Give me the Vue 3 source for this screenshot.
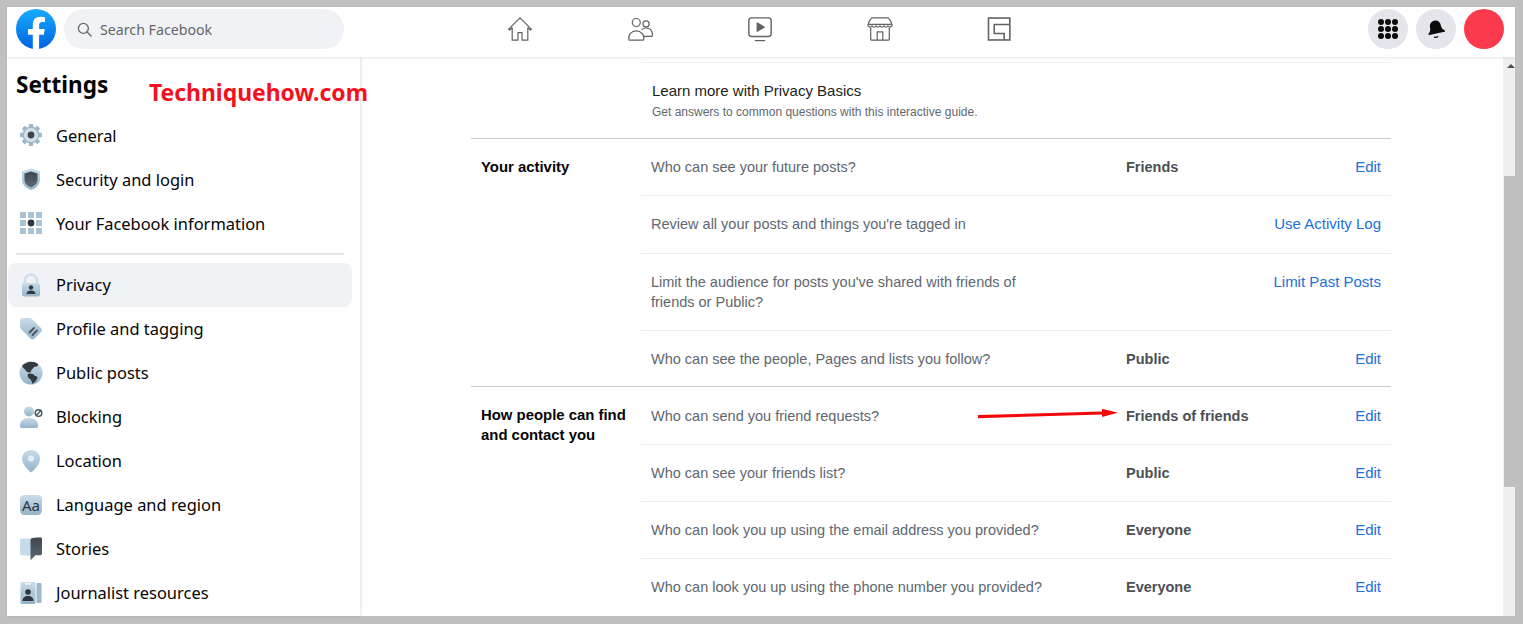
<script setup>
const navIcons = ['home', 'friends', 'watch', 'market', 'groups']
const menuTop = [
  { icon: 'i-gear', label: 'General' },
  { icon: 'i-shield', label: 'Security and login' },
  { icon: 'i-grid', label: 'Your Facebook information' }
]
const menuBottom = [
  { icon: 'i-lock', label: 'Privacy', active: true },
  { icon: 'i-tag', label: 'Profile and tagging' },
  { icon: 'i-globe', label: 'Public posts' },
  { icon: 'i-block', label: 'Blocking' },
  { icon: 'i-pin', label: 'Location' },
  { icon: 'i-lang', label: 'Language and region' },
  { icon: 'i-book', label: 'Stories' },
  { icon: 'i-badge', label: 'Journalist resources' }
]
const sections = [
  {
    title: 'Your activity',
    rows: [
      { q: 'Who can see your future posts?', v: 'Friends', a: 'Edit', h: 56 },
      { q: "Review all your posts and things you're tagged in", v: '', a: 'Use Activity Log', h: 58, nudge: true },
      { q: "Limit the audience for posts you've shared with friends of friends or Public?", v: '', a: 'Limit Past Posts', h: 77, top: true },
      { q: 'Who can see the people, Pages and lists you follow?', v: 'Public', a: 'Edit', h: 56 }
    ]
  },
  {
    title: 'How people can find and contact you',
    rows: [
      { q: 'Who can send you friend requests?', v: 'Friends of friends', a: 'Edit', h: 57 },
      { q: 'Who can see your friends list?', v: 'Public', a: 'Edit', h: 57 },
      { q: 'Who can look you up using the email address you provided?', v: 'Everyone', a: 'Edit', h: 57 },
      { q: 'Who can look you up using the phone number you provided?', v: 'Everyone', a: 'Edit', h: 57 }
    ]
  }
]
</script>

<template>
  <div class="frame">
    <svg class="defs" aria-hidden="true">
      <defs>
        <linearGradient id="fb" x1="0" y1="0" x2="0" y2="1"><stop offset="0" stop-color="#18acfe" /><stop offset="1" stop-color="#0163e0" /></linearGradient>
        <linearGradient id="pale" x1="0" y1="0" x2="0" y2="1"><stop offset="0" stop-color="#c9dcea" /><stop offset="1" stop-color="#94b4c9" /></linearGradient>
        <linearGradient id="dark" x1="0" y1="0" x2="0" y2="1"><stop offset="0" stop-color="#3f4650" /><stop offset="1" stop-color="#5f6873" /></linearGradient>
        <symbol id="i-gear" viewBox="0 0 24 24">
          <g fill="#9db8ca"><circle cx="12" cy="12" r="8.5" />
            <rect x="9.8" y="1" width="4.4" height="5" rx="1" /><rect x="9.8" y="18" width="4.4" height="5" rx="1" />
            <rect x="1" y="9.8" width="5" height="4.4" rx="1" /><rect x="18" y="9.8" width="5" height="4.4" rx="1" />
            <rect x="9.8" y="1" width="4.4" height="5" rx="1" transform="rotate(45 12 12)" /><rect x="9.8" y="18" width="4.4" height="5" rx="1" transform="rotate(45 12 12)" />
            <rect x="1" y="9.8" width="5" height="4.4" rx="1" transform="rotate(45 12 12)" /><rect x="18" y="9.8" width="5" height="4.4" rx="1" transform="rotate(45 12 12)" /></g>
          <circle cx="12" cy="12" r="7" fill="#d3e0ea" /><circle cx="12" cy="12" r="3.4" fill="#3f4650" />
        </symbol>
        <symbol id="i-shield" viewBox="0 0 24 24">
          <path d="M12 1.5 21 4.5v8c0 5.5-4.5 9-9 10.500-4.500-1.500-9-5-9-10.500v-8z" fill="url(#pale)" />
          <path d="M12 4.500 18.500 6.500v6c0 4-3.200 6.500-6.500 7.800-3.300-1.300-6.500-3.800-6.500-7.800v-6z" fill="url(#dark)" />
        </symbol>
        <symbol id="i-grid" viewBox="0 0 24 24">
          <g fill="#a9c3d4"><rect x="1" y="1" width="6" height="6" /><rect x="9" y="1" width="6" height="6" /><rect x="17" y="1" width="6" height="6" />
            <rect x="1" y="9" width="6" height="6" /><rect x="17" y="9" width="6" height="6" />
            <rect x="1" y="17" width="6" height="6" /><rect x="9" y="17" width="6" height="6" /><rect x="17" y="17" width="6" height="6" /></g>
          <circle cx="12" cy="12" r="3.400" fill="#2f353d" />
        </symbol>
        <symbol id="i-lock" viewBox="0 0 24 24">
          <path d="M6 11V7.500a6 6 0 0 1 12 0V11" fill="none" stroke="#d2dfe9" stroke-width="2.600" />
          <rect x="3" y="10" width="18" height="13.500" rx="2.500" fill="url(#pale)" />
          <circle cx="12" cy="14.500" r="2.200" fill="#343a42" /><path d="M7.500 21c0-2.500 2-3.500 4.500-3.500s4.500 1 4.500 3.500z" fill="#343a42" />
        </symbol>
        <symbol id="i-tag" viewBox="0 0 24 24">
          <path d="M1 3.500C1 2 2 1 3.500 1h7c1 0 1.800.4 2.500 1l9 9c1.200 1.200 1.200 2.800 0 4l-6.500 6.500c-1.200 1.200-2.800 1.200-4 0L2 12c-.7-.7-1-1.500-1-2.500z" fill="url(#pale)" />
          <path d="M10.500 15.500 15 11M13.500 18 18 13.500" stroke="#4a525c" stroke-width="1.800" stroke-linecap="round" />
        </symbol>
        <symbol id="i-globe" viewBox="0 0 24 24">
          <circle cx="12" cy="12" r="11.500" fill="url(#pale)" />
          <path d="M3 5C6 1 14-1 19 3c1 2-2 3-4 3-1 2-3 2-3 5-2 1-5 0-5.500-2C5.500 8 4 7 3 5zM9 13c3-1 6 0 7 2 2 0 3 1 2 3-1 2-3 4-5 5 0-3-1-4-2-5-2-1-3-3-2-5z" fill="#343a42" />
        </symbol>
        <symbol id="i-block" viewBox="0 0 24 24">
          <circle cx="10" cy="6.500" r="5" fill="url(#pale)" /><path d="M1 21c0-5 3-8 9-8s9 3 9 8c0 1.500-1 2-2 2H3c-1 0-2-.5-2-2z" fill="url(#pale)" />
          <circle cx="19.500" cy="8" r="3.300" fill="none" stroke="#4a525c" stroke-width="1.400" /><path d="M17.300 10.300 21.700 5.700" stroke="#4a525c" stroke-width="1.400" />
        </symbol>
        <symbol id="i-pin" viewBox="0 0 24 24">
          <path d="M12 1c5 0 9 3.800 9 8.800 0 5-5 10.500-9 13.700-4-3.200-9-8.700-9-13.700C3 4.800 7 1 12 1z" fill="url(#pale)" /><circle cx="12" cy="9.500" r="3" fill="#e4eef5" />
        </symbol>
        <symbol id="i-lang" viewBox="0 0 24 24">
          <rect x="1" y="2" width="22" height="20" rx="4.500" fill="url(#pale)" />
        </symbol>
        <symbol id="i-book" viewBox="0 0 24 24">
          <path d="M1 3.500C1 2.300 2 1.500 3 1.500h9v17H3c-1 0-2-.8-2-2z" fill="#c6dbe9" />
          <path d="M11.500 3c0-1 .8-1.800 2-2 2.500-.4 6-.5 8-.5 1 0 1.500.7 1.500 1.700v14.300c0 1-.7 1.700-1.500 1.700h-5l-5 5z" fill="url(#dark)" />
        </symbol>
        <symbol id="i-badge" viewBox="0 0 24 24">
          <rect x="1.500" y="1" width="15" height="22" rx="1.500" fill="url(#pale)" /><rect x="17.500" y="2" width="5" height="20" rx="1" fill="#9db8ca" />
          <rect x="6" y="2" width="6" height="1.600" fill="#eef4f8" />
          <circle cx="9" cy="11" r="2.800" fill="#2f353d" /><path d="M3.500 20c0-3.500 2.500-5 5.500-5s5.500 1.500 5.500 5z" fill="#2f353d" />
        </symbol>
      </defs>
    </svg>

    <header class="topbar">
      <div class="top-left">
        <svg class="logo" viewBox="0 0 40 40">
          <circle cx="20" cy="20" r="20" fill="url(#fb)" />
          <path d="M27.800 25.800l.9-5.800h-5.600v-3.800c0-1.600.8-3.100 3.300-3.100h2.500V8.200s-2.300-.4-4.500-.4c-4.600 0-7.600 2.800-7.600 7.800V20H12v5.800h4.800V40h6.300V25.800z" fill="#fff" />
        </svg>
        <div class="search">
          <svg class="search-icon" viewBox="0 0 16 16" fill="none" stroke="#65676b" stroke-width="1.400">
            <circle cx="6.800" cy="6.800" r="5.300" /><path d="M10.700 10.700 15 15" stroke-linecap="round" />
          </svg>
          <span>Search Facebook</span>
        </div>
      </div>
      <nav class="nav">
        <div v-for="n in navIcons" :key="n" class="nav-item">
          <svg viewBox="0 0 28 28" class="nav-icon" fill="none" stroke="#606266" stroke-width="1.300" stroke-linejoin="round" stroke-linecap="round">
            <template v-if="n === 'home'">
              <path d="M14 2 1.800 14.200l.9 1 2.900-2.500V26h6.200v-8h4.400v8h6.200V12.700l2.900 2.500.9-1z" />
            </template>
            <template v-else-if="n === 'friends'">
              <circle cx="10" cy="7" r="4.300" /><circle cx="20.500" cy="8.500" r="3.300" />
              <path d="M2 25c-1-5 3-9 8-9s9 4 8 9c0 .5-.5 1-1 1H3c-.5 0-1-.5-1-1z" />
              <path d="M16 14.500c1.300-1 3-1.600 4.500-1.600 4.500 0 7.500 3.600 6.800 8 0 .6-.5 1.100-1 1.100H18.500" />
            </template>
            <template v-else-if="n === 'watch'">
              <rect x="2" y="2" width="24" height="20" rx="3" stroke-width="1.500" />
              <path d="M11 7.500v9l7.500-4.500z" fill="#606266" /><path d="M9 26.500h10" stroke-width="1.500" />
            </template>
            <template v-else-if="n === 'market'">
              <path d="M5 2h18c2 2 3.500 5 4 8-1 2.500-3.400 2.500-4.400.6-1 2-3.600 2-4.400 0-1 2-3.400 2-4.200 0-1 2-3.400 2-4.200 0-1 2-3.600 2-4.400 0-1 1.900-3.400 1.900-4.400-.6.500-3 2-6 4-8z" />
              <path d="M1.500 9h25" /><path d="M4 13v12c0 .6.400 1 1 1h18c.6 0 1-.4 1-1V13" />
              <path d="M11 26V17h6v9" />
            </template>
            <template v-else>
              <rect x="1.600" y="2.200" width="23" height="23.600" stroke-width="1.700" stroke-linejoin="miter" />
              <path d="M24.600 9.200H7.800V18.800H18.500V25.800" stroke-width="1.700" stroke-linejoin="miter" stroke-linecap="butt" />
            </template>
          </svg>
        </div>
      </nav>
      <div class="top-right">
        <div class="round">
          <svg class="apps" viewBox="0 0 20 20" fill="#0b0b0b">
            <circle v-for="p in 9" :key="p" :cx="3 + ((p - 1) % 3) * 7" :cy="3 + Math.floor((p - 1) / 3) * 7" r="3" />
          </svg>
        </div>
        <div class="round">
          <svg class="bell" viewBox="0 0 20 20" fill="#0b0b0b">
            <path d="M10 1.500c3.500 0 5.500 2.500 5.500 6 0 2.500 1 4.200 2.800 5.700.5.500.2 1.300-.5 1.300H2.200c-.7 0-1-.8-.5-1.300C3.500 11.700 4.500 10 4.500 7.500c0-3.500 2-6 5.500-6z" transform="rotate(-12 10 10)" />
            <path d="M8 17.600c1.400.4 2.900.2 4-.6l.6.800c-1.400 1.200-3.200 1.500-4.700.9z" />
          </svg>
        </div>
        <div class="avatar"></div>
      </div>
    </header>

    <div class="content">
      <aside class="sidebar">
        <h1 class="side-title">Settings</h1>
        <span class="watermark">Techniquehow.com</span>
        <div v-for="m in menuTop" :key="m.label" class="menu-item">
          <svg class="menu-icon"><use :href="'#' + m.icon" /></svg>
          <span>{{ m.label }}</span>
        </div>
        <div class="side-divider"></div>
        <div v-for="m in menuBottom" :key="m.label" class="menu-item" :class="{ active: m.active }">
          <svg class="menu-icon"><use :href="'#' + m.icon" /></svg>
          <span v-if="m.icon === 'i-lang'" class="aa">Aa</span>
          <span>{{ m.label }}</span>
        </div>
      </aside>

      <main class="main">
        <div class="table">
          <div class="intro">
            <div class="intro-title">Learn more with Privacy Basics</div>
            <div class="intro-sub">Get answers to common questions with this interactive guide.</div>
          </div>
          <section v-for="s in sections" :key="s.title" class="section">
            <h2 class="sec-title">{{ s.title }}</h2>
            <div class="rows">
              <div v-for="r in s.rows" :key="r.q" class="row" :class="{ 'row-top': r.top, 'row-nudge': r.nudge }" :style="{ height: r.h + 'px' }">
                <div class="q">{{ r.q }}</div>
                <div class="v">{{ r.v }}</div>
                <a class="a">{{ r.a }}</a>
              </div>
            </div>
          </section>
          <svg class="arrow" viewBox="0 0 142 13">
            <path d="M1 9 125 5.600V2.700L141 6.700 125 11V8.600L1 12.200z" fill="#f20a0a" />
          </svg>
        </div>
      </main>

      <div class="scrollbar">
        <div class="up"></div>
        <div class="thumb"></div>
      </div>
    </div>
  </div>
</template>

<style>
html, body { margin: 0; background: #c0c0c0; }
</style>

<style scoped>
.frame {
  box-sizing: border-box;
  width: 1523px;
  height: 624px;
  padding: 7px 8px 8px 7px;
  background: #c0c0c0;
  overflow: hidden;
  display: flex;
  flex-direction: column;
  font-family: "Liberation Sans", Arial, sans-serif;
}
.defs { width: 0; height: 0; display: block; }
.topbar {
  height: 50px;
  flex: none;
  box-sizing: border-box;
  padding-top: 2px;
  background: #fff;
  display: grid;
  grid-template-columns: 1fr auto 1fr;
  align-items: start;
  position: relative;
  z-index: 2;
  box-shadow: 0 1px 3px rgba(0, 0, 0, .1);
}
.top-left { display: flex; align-items: center; gap: 8px; padding-left: 9px; }
.logo { width: 40px; height: 40px; display: block; }
.search {
  width: 280px;
  height: 40px;
  border-radius: 20px;
  background: #f0f2f5;
  display: flex;
  align-items: center;
  gap: 8px;
  padding-left: 13px;
  box-sizing: border-box;
  font: 14.200px "Noto Sans", sans-serif;
  color: #65676b;
}
.search-icon { width: 15px; height: 15px; }
.nav { display: flex; margin-left: -2px; padding-top: 7px; }
.nav-item { width: 120px; display: flex; justify-content: center; }
.nav-icon { width: 26px; height: 26px; display: block; }
.top-right { display: flex; justify-content: flex-end; gap: 8px; padding-right: 11px; }
.round {
  width: 40px;
  height: 40px;
  border-radius: 50%;
  background: #e4e6eb;
  display: flex;
  align-items: center;
  justify-content: center;
}
.apps { width: 20px; height: 20px; }
.bell { width: 20px; height: 20px; }
.avatar { width: 40px; height: 40px; border-radius: 50%; background: #fb3a4e; }
.content { flex: 1; min-height: 0; display: flex; background: #fff; }
.sidebar {
  width: 353px;
  flex: none;
  position: relative;
  background: #fff;
  box-shadow: 1px 0 3px rgba(0, 0, 0, .12);
  font: 16.450px "Noto Sans", sans-serif;
  color: #050505;
  z-index: 1;
}
.side-title { margin: 8px 0 8px 9px; height: 40px; font: 700 22.500px/40px "Noto Sans", sans-serif; color: #050505; }
.watermark {
  position: absolute;
  left: 142px;
  top: 18px;
  font: 700 22.900px/36px "Noto Sans", sans-serif;
  color: #f5101e;
  white-space: nowrap;
}
.menu-item {
  position: relative;
  height: 44px;
  width: 344px;
  margin-left: 1px;
  padding-left: 11px;
  box-sizing: border-box;
  display: flex;
  align-items: center;
  gap: 13px;
  border-radius: 8px;
}
.menu-item.active { background: #f0f2f5; }
.menu-icon { width: 24px; height: 24px; flex: none; }
.aa {
  position: absolute;
  left: 12px;
  width: 22px;
  text-align: center;
  font: 15px "Noto Sans", sans-serif;
  color: #2f353d;
}
.side-divider { height: 1.500px; margin: 8px 9px 8px 9px; background: #e4e6eb; width: 328px; }
.main { flex: 1; min-width: 0; background: #fff; overflow: hidden; }
.table { position: relative; width: 920px; margin-left: 111px; padding-top: 5px; }
.intro {
  height: 76px;
  margin-left: 170px;
  padding-left: 11px;
  box-sizing: border-box;
  border-top: 1px solid #eff0f2;
}
.intro-title { padding-top: 19px; font-size: 15px; line-height: 18px; color: #1c1e21; }
.intro-sub { margin-top: 4px; font-size: 12px; line-height: 16px; color: #606770; }
.section { display: flex; border-top: 1px solid #c9ccd1; }
.sec-title {
  width: 170px;
  flex: none;
  box-sizing: border-box;
  margin: 0;
  padding: 18px 10px 0 10px;
  font: 700 14.900px/20px "Liberation Sans", sans-serif;
  color: #050505;
}
.rows { flex: 1; }
.row {
  display: flex;
  align-items: center;
  box-sizing: border-box;
  padding: 0 10px;
  border-top: 1px solid #e9ebee;
  font-size: 14.500px;
  line-height: 20px;
}
.row:first-child { border-top: 0; }
.row-top { align-items: flex-start; padding-top: 18px; }
.row-nudge { padding-bottom: 1px; }
.q { width: 475px; flex: none; color: #606770; padding-right: 70px; box-sizing: border-box; }
.v { flex: 1; font-weight: 700; color: #4b4f56; }
.a { color: #216fdb; white-space: nowrap; font-size: 15px; }
.arrow { position: absolute; left: 506px; top: 349px; width: 142px; height: 13px; }
.scrollbar { width: 12px; flex: none; background: #f0f0f0; position: relative; }
.up {
  width: 0;
  height: 0;
  margin: 7px 0 0 4px;
  border-left: 4px solid transparent;
  border-right: 4px solid transparent;
  border-bottom: 4px solid #505050;
}
.thumb { height: 311px; margin: 108px 0 0 1px; background: #c0c0c0; }
</style>
